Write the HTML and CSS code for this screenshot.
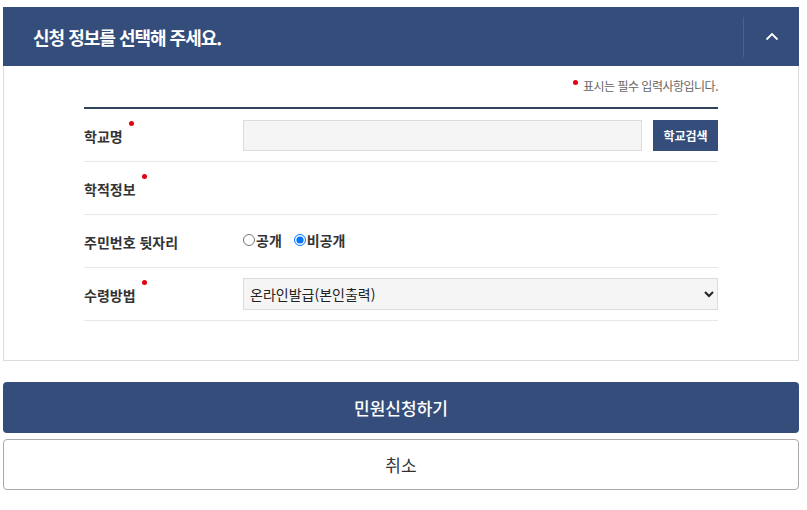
FILE: index.html
```html
<!DOCTYPE html>
<html lang="ko">
<head>
  <meta charset="utf-8">
  <title>민원신청</title>
  <link rel="stylesheet" href="styles.css">
</head>
<body>
  <div class="wrap">
    <div class="panel">
      <div class="panel-head">
        <h2 class="panel-title">신청 정보를 선택해 주세요.</h2>
        <button class="toggle" type="button" aria-label="접기">
          <svg width="14" height="9" viewBox="0 0 14 9"><path d="M1.5 7.5 L7 2 L12.5 7.5" fill="none" stroke="#fff" stroke-width="1.8"/></svg>
        </button>
      </div>

      <div class="panel-body">
        <p class="req-note"><span class="dot"></span>표시는 필수 입력사항입니다.</p>

        <div class="form-table">
          <div class="form-row">
            <div class="label">학교명<span class="dot"></span></div>
            <div class="field">
              <input type="text" class="text-input">
              <button type="button" class="btn-search">학교검색</button>
            </div>
          </div>
          <div class="form-row">
            <div class="label">학적정보<span class="dot"></span></div>
            <div class="field"></div>
          </div>
          <div class="form-row">
            <div class="label">주민번호 뒷자리</div>
            <div class="field radios">
              <label><input type="radio" name="rrn">공개</label>
              <label><input type="radio" name="rrn" checked>비공개</label>
            </div>
          </div>
          <div class="form-row">
            <div class="label">수령방법<span class="dot"></span></div>
            <div class="field">
              <select class="select">
                <option>온라인발급(본인출력)</option>
              </select>
            </div>
          </div>
        </div>
      </div>
    </div>

    <div class="actions">
      <button type="button" class="btn-submit">민원신청하기</button>
      <button type="button" class="btn-cancel">취소</button>
    </div>
  </div>
</body>
</html>
```

FILE: styles.css
```css
body {
  margin: 0;
  background: #fff;
  font-family: "Noto Sans CJK KR", "Noto Sans", sans-serif;
  color: #333;
}

.wrap {
  width: 796px;
  margin: 7px 0 0 3px;
}

.panel-head {
  height: 59px;
  background-color: #344d7a;
  display: flex;
  align-items: center;
}

.panel-title {
  flex: 1;
  margin: 0;
  padding-left: 30px;
  color: #fff;
  font-size: 18px;
  font-weight: 700;
  letter-spacing: -1px;
}

.toggle {
  width: 56px;
  height: 40px;
  border: none;
  border-left: 1px solid #4a6190;
  background: transparent;
  display: flex;
  align-items: center;
  justify-content: center;
  padding: 0;
}

.panel-body {
  border: 1px solid #dcdcdc;
  border-top: none;
  height: 294px;
  padding: 0 80px 0 80px;
}

.req-note {
  margin: 0;
  padding-top: 11px;
  height: 41px;
  box-sizing: border-box;
  text-align: right;
  font-size: 12px;
  color: #666;
  letter-spacing: -0.5px;
}

.req-note .dot {
  margin-right: 5px;
  vertical-align: 6px;
}

.dot {
  display: inline-block;
  width: 5px;
  height: 5px;
  border-radius: 50%;
  background: #e3000f;
}

.form-table {
  border-top: 2px solid #34435c;
}

.form-row {
  display: flex;
  align-items: center;
  height: 52px;
  border-bottom: 1px solid #e8e8e8;
}

.label {
  width: 159px;
  font-size: 14px;
  font-weight: 700;
  color: #333;
  padding-top: 2px;
}

.label .dot {
  position: relative;
  top: -16px;
  margin-left: 6px;
}

.field {
  flex: 1;
  display: flex;
  align-items: center;
}

.text-input {
  flex: 1;
  height: 31px;
  box-sizing: border-box;
  border: 1px solid #dcdcdc;
  background: #f5f5f5;
  margin: 0 11px 0 0;
}

.btn-search {
  width: 65px;
  height: 31px;
  border: none;
  background: #344d7a;
  color: #fff;
  font-family: inherit;
  font-size: 12px;
  font-weight: 700;
  padding: 0;
}

.radios {
  font-size: 14px;
  font-weight: 700;
  padding-bottom: 2px;
}

.radios label {
  display: flex;
  align-items: center;
  margin-right: 12px;
}

.radios input {
  margin: 0 1px 0 0;
  width: 12px;
  height: 12px;
}

.select {
  flex: 1;
  height: 32px;
  border: 1px solid #dcdcdc;
  background: #f5f5f5;
  font-family: inherit;
  font-size: 14px;
  color: #222;
  padding: 0 2px;
}

.actions {
  margin-top: 21px;
}

.btn-submit,
.btn-cancel {
  display: block;
  width: 100%;
  height: 51px;
  border-radius: 4px;
  font-family: inherit;
  font-size: 17px;
}

.btn-submit {
  border: none;
  background: #344d7a;
  color: #fff;
  font-weight: 500;
}

.btn-cancel {
  margin-top: 6px;
  border: 1px solid #aaa;
  background: #fff;
  color: #333;
}
```
